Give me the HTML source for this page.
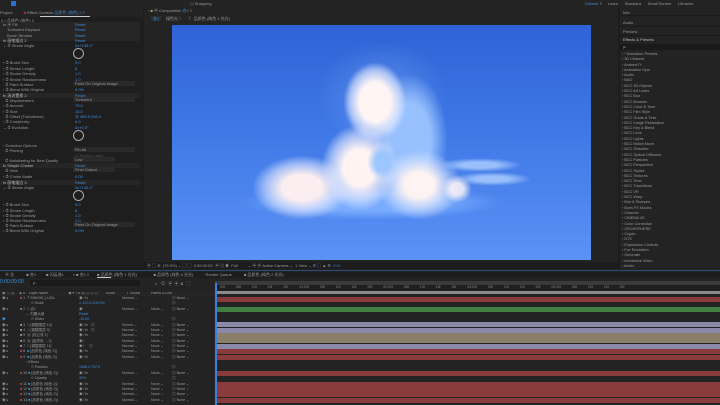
<!DOCTYPE html>
<html><head><meta charset="utf-8"><style>
*{margin:0;padding:0;box-sizing:border-box}
body{width:720px;height:405px;overflow:hidden;background:#1d1d1d;position:relative;font-family:"Liberation Sans","Noto Sans CJK SC",sans-serif;font-size:4px;color:#9a9a9a}
.a{position:absolute;white-space:nowrap;line-height:5px}
.b{color:#3d8fe0}
.bar{position:absolute;left:215px;right:0;height:5px}
.col{position:absolute;top:296px;line-height:5.35px;font-size:3.6px;white-space:nowrap;overflow:hidden}
.c{position:absolute;border-radius:45%}
</style></head><body>
<div class="a" style="left:0;top:0;width:720px;height:8px;background:#232323"></div>
<div class="a" style="left:11px;top:1px;width:5px;height:5px;background:#2d6fd0"></div>
<div class="a" style="left:190px;top:1px;color:#999">☐ Snapping</div>
<div class="a" style="left:585px;top:1px" ><span class="b">Default</span> &nbsp;≡ &nbsp;&nbsp;&nbsp; Learn &nbsp;&nbsp;&nbsp;&nbsp; Standard &nbsp;&nbsp;&nbsp;&nbsp; Small Screen &nbsp;&nbsp;&nbsp;&nbsp; Libraries</div>

<div class="a" style="left:0;top:8px;width:143px;height:255px;background:#1e1e1e;overflow:hidden">
<div class="a" style="left:0;top:0;width:143px;height:9px;background:#232323"></div>
<div class="a" style="left:0;top:2px">Project &nbsp;&nbsp;&nbsp;&nbsp;&nbsp;&nbsp;&nbsp;&nbsp; <span style="color:#c33">■</span> Effect Controls <span class="b">品质色 (纯色) 2</span> ≡</div>
</div>
<div class="a" style="left:40px;top:16px;width:50px;height:1px;background:#ccc"></div>
<div class="a" style="left:1px;top:18px">2 • 品质色 (纯色) 2</div>
<div class="a" style="left:0;top:22px;width:140px;height:19px;background:#262626"></div>
<div class="a" style="left:3px;top:22px">fx ▣ Fill</div><div class="a b" style="left:75px;top:22px">Reset</div>
<div class="a" style="left:7px;top:27px">Turbulent Displace</div><div class="a b" style="left:75px;top:27px">Reset</div>
<div class="a" style="left:7px;top:33px">Brush Strokes</div><div class="a b" style="left:75px;top:33px">Reset</div>
<div class="a" style="left:3px;top:38px;color:#bbb">fx 画笔描边 2</div><div class="a b" style="left:75px;top:38px">Reset</div>
<div class="a" style="left:3px;top:43px">⌄ ⏱ Stroke Angle</div><div class="a b" style="left:75px;top:43px">0x+135.0°</div>
<div class="a" style="left:73px;top:48px;width:11px;height:11px;border:1px solid #aaa;border-radius:50%"></div>
<div class="a" style="left:3px;top:60px">› ⏱ Brush Size</div><div class="a b" style="left:75px;top:60px">5.0</div>
<div class="a" style="left:3px;top:66px">› ⏱ Stroke Length</div><div class="a b" style="left:75px;top:66px">8</div>
<div class="a" style="left:3px;top:71px">› ⏱ Stroke Density</div><div class="a b" style="left:75px;top:71px">1.0</div>
<div class="a" style="left:3px;top:77px">› ⏱ Stroke Randomness</div><div class="a b" style="left:75px;top:77px">1.0</div>
<div class="a" style="left:3px;top:82px">&nbsp; ⏱ Paint Surface</div><div class="a" style="left:73px;top:81px;width:62px;height:5px;background:#2a2a2a;padding-left:2px">Paint On Original Image</div>
<div class="a" style="left:3px;top:87px">› ⏱ Blend With Original</div><div class="a b" style="left:75px;top:87px">0.0%</div>
<div class="a" style="left:0;top:93px;width:140px;height:5px;background:#262626"></div>
<div class="a" style="left:3px;top:93px;color:#bbb">fx 湍流置换 2</div><div class="a b" style="left:75px;top:93px">Reset</div>
<div class="a" style="left:3px;top:98px">&nbsp; ⏱ Displacement</div><div class="a" style="left:73px;top:97px;width:62px;height:5px;background:#2a2a2a;padding-left:2px">Turbulent</div>
<div class="a" style="left:3px;top:103px">› ⏱ Amount</div><div class="a b" style="left:75px;top:103px">75.0</div>
<div class="a" style="left:3px;top:109px">› ⏱ Size</div><div class="a b" style="left:75px;top:109px">15.0</div>
<div class="a" style="left:3px;top:114px">&nbsp; ⏱ Offset (Turbulence)</div><div class="a b" style="left:75px;top:114px">⊕ 960.0,540.0</div>
<div class="a" style="left:3px;top:119px">› ⏱ Complexity</div><div class="a b" style="left:75px;top:119px">6.0</div>
<div class="a" style="left:3px;top:125px">⌄ ⏱ Evolution</div><div class="a b" style="left:75px;top:125px">0x+0.0°</div>
<div class="a" style="left:73px;top:130px;width:11px;height:11px;border:1px solid #aaa;border-radius:50%"></div>
<div class="a" style="left:3px;top:143px">› Evolution Options</div>
<div class="a" style="left:3px;top:148px">&nbsp; ⏱ Pinning</div><div class="a" style="left:73px;top:147px;width:62px;height:5px;background:#2a2a2a;padding-left:2px">Pin All</div>
<div class="a" style="left:75px;top:153px;color:#555">☐ Resize Layer</div>
<div class="a" style="left:3px;top:158px">&nbsp; ⏱ Antialiasing for Best Quality</div><div class="a" style="left:73px;top:157px;width:42px;height:5px;background:#2a2a2a;padding-left:2px">Low</div>
<div class="a" style="left:0;top:163px;width:140px;height:5px;background:#262626"></div>
<div class="a" style="left:3px;top:163px;color:#bbb">fx Simple Choker</div><div class="a b" style="left:75px;top:163px">Reset</div>
<div class="a" style="left:3px;top:168px">&nbsp; ⏱ View</div><div class="a" style="left:73px;top:167px;width:42px;height:5px;background:#2a2a2a;padding-left:2px">Final Output</div>
<div class="a" style="left:3px;top:174px">› ⏱ Choke Matte</div><div class="a b" style="left:75px;top:174px">0.00</div>
<div class="a" style="left:0;top:180px;width:140px;height:5px;background:#262626"></div>
<div class="a" style="left:3px;top:180px;color:#bbb">fx 画笔描边 3</div><div class="a b" style="left:75px;top:180px">Reset</div>
<div class="a" style="left:3px;top:185px">⌄ ⏱ Stroke Angle</div><div class="a b" style="left:75px;top:185px">0x+135.0°</div>
<div class="a" style="left:73px;top:190px;width:11px;height:11px;border:1px solid #aaa;border-radius:50%"></div>
<div class="a" style="left:3px;top:202px">› ⏱ Brush Size</div><div class="a b" style="left:75px;top:202px">5.0</div>
<div class="a" style="left:3px;top:208px">› ⏱ Stroke Length</div><div class="a b" style="left:75px;top:208px">8</div>
<div class="a" style="left:3px;top:213px">› ⏱ Stroke Density</div><div class="a b" style="left:75px;top:213px">1.0</div>
<div class="a" style="left:3px;top:218px">› ⏱ Stroke Randomness</div><div class="a b" style="left:75px;top:218px">1.0</div>
<div class="a" style="left:3px;top:223px">&nbsp; ⏱ Paint Surface</div><div class="a" style="left:73px;top:222px;width:62px;height:5px;background:#2a2a2a;padding-left:2px">Paint On Original Image</div>
<div class="a" style="left:3px;top:228px">› ⏱ Blend With Original</div><div class="a b" style="left:75px;top:228px">0.0%</div>

<!-- composition panel -->
<div class="a" style="left:144px;top:8px;width:474px;height:262px;background:#232323"></div>
<div class="a" style="left:148px;top:8px">› <span style="color:#c8a060">■</span> ▣ Composition <span class="b">合1</span> ≡</div>
<div class="a" style="left:151px;top:16px;width:10px;height:5px;background:#2d2d2d"></div>
<div class="a" style="left:153px;top:16px"><span class="b">合1</span> &nbsp;&nbsp;&nbsp;&nbsp; 绿色光 〉 &nbsp; 〈 &nbsp; 品质色 (纯色 1 光光)</div>
<div class="a" style="left:172px;top:25px;width:419px;height:235px;background:linear-gradient(180deg,#2f62d6 0%,#3f78e6 45%,#5b92f6 100%);overflow:hidden">
 <div class="c" style="left:140px;top:10px;width:140px;height:120px;background:radial-gradient(ellipse,rgba(150,195,255,.35),rgba(140,190,255,0) 65%)"></div>
 <div class="c" style="left:70px;top:160px;width:260px;height:35px;border-radius:50%;background:radial-gradient(ellipse,rgba(125,175,255,.9) 35%,rgba(120,170,255,0) 70%)"></div>
 <div class="c" style="left:200px;top:50px;width:75px;height:130px;background:radial-gradient(ellipse,rgba(160,200,255,.9) 40%,rgba(150,190,255,0) 72%)"></div>
 <div class="c" style="left:172px;top:38px;width:62px;height:78px;background:radial-gradient(ellipse,#fff6f4 35%,rgba(230,235,255,.6) 58%,rgba(200,220,255,0) 72%)"></div>
 <div class="c" style="left:150px;top:100px;width:75px;height:85px;background:radial-gradient(ellipse,#fff4f2 30%,rgba(235,238,255,.55) 55%,rgba(200,220,255,0) 72%)"></div>
 <div class="c" style="left:80px;top:130px;width:100px;height:65px;background:radial-gradient(ellipse,#fbeef0 28%,rgba(230,235,255,.55) 52%,rgba(200,220,255,0) 70%)"></div>
 <div class="c" style="left:205px;top:125px;width:85px;height:70px;background:radial-gradient(ellipse,#fdf3f2 25%,rgba(220,230,255,.55) 50%,rgba(180,210,255,0) 70%)"></div>
 <div class="c" style="left:195px;top:120px;width:30px;height:35px;background:radial-gradient(ellipse,rgba(150,195,255,.9) 35%,rgba(150,190,255,0) 70%)"></div>
 <div class="c" style="left:270px;top:150px;width:30px;height:28px;background:radial-gradient(ellipse,rgba(255,245,245,.85) 30%,rgba(200,220,255,0) 70%)"></div>
 <div class="c" style="left:265px;top:133px;width:85px;height:14px;border-radius:50%;background:radial-gradient(ellipse,rgba(175,208,255,.8) 30%,rgba(170,205,255,0) 70%)"></div>
 <div class="c" style="left:280px;top:147px;width:80px;height:14px;border-radius:50%;background:radial-gradient(ellipse,rgba(175,208,255,.8) 30%,rgba(170,205,255,0) 70%)"></div>
</div>
<div class="a" style="left:144px;top:262px;width:474px;height:7px;background:#1c1c1c"></div>
<div class="a" style="left:147px;top:263px">▣ ▢ ⊚ &nbsp;(75.0%) ⌄ ▢ ▢ &nbsp;0:00:00:00 &nbsp;▣ ◎ ◉ &nbsp;Full &nbsp;&nbsp;&nbsp;&nbsp;&nbsp;&nbsp;&nbsp; ⌄ ▣ ▣ Active Camera ⌄ &nbsp;1 View ⌄ <span class="b">⊞</span> ▢ ▲ ⚙ <span class="b">+0.0</span></div>

<!-- right panel -->
<div class="a" style="left:620px;top:8px;width:100px;height:262px;background:#232323;overflow:hidden">
<div class="a" style="left:3px;top:2px">Info</div>
<div class="a" style="left:0;top:7px;width:100px;height:1px;background:#1a1a1a"></div>
<div class="a" style="left:3px;top:12px">Audio</div>
<div class="a" style="left:0;top:18px;width:100px;height:1px;background:#1a1a1a"></div>
<div class="a" style="left:3px;top:21px">Preview</div>
<div class="a" style="left:0;top:27px;width:100px;height:1px;background:#1a1a1a"></div>
<div class="a" style="left:3px;top:29px;color:#bbb">Effects &amp; Presets</div>
<div class="a" style="left:0;top:36px;width:100px;height:6px;background:#1a1a1a;padding-left:3px">ρ-</div>
<div class="a" style="left:2px;top:44px;line-height:5.3px;font-size:3.8px">› * Animation Presets<br>› 3D Channel<br>› AndrewYY<br>› Animation Gym<br>› Audio<br>› BAO<br>› BCC 3D Objects<br>› BCC Art Looks<br>› BCC Blur<br>› BCC Browser<br>› BCC Color &amp; Tone<br>› BCC Film Style<br>› BCC Grads &amp; Tints<br>› BCC Image Restoration<br>› BCC Key &amp; Blend<br>› BCC Lens<br>› BCC Lights<br>› BCC Match Move<br>› BCC Obsolete<br>› BCC Optical Diffusion<br>› BCC Particles<br>› BCC Perspective<br>› BCC Stylize<br>› BCC Textures<br>› BCC Time<br>› BCC Transitions<br>› BCC VR<br>› BCC Warp<br>› Blur &amp; Sharpen<br>› Boris FX Mocha<br>› Channel<br>› CINEMA 4D<br>› Color Correction<br>› CROSSPHERE<br>› Crypto<br>› DTS<br>› Expression Controls<br>› Fce Emulation<br>› Generate<br>› Immersive Video<br>› lensfx</div>
</div>

<!-- timeline -->
<div class="a" style="left:0;top:270px;width:720px;height:135px;background:#232323"></div>
<div class="a" style="left:0;top:270px;width:720px;height:1px;background:#2a4a7a"></div>
<div class="a" style="left:0;top:272px;width:720px;height:6px;background:#1d1d1d;overflow:hidden">
<div class="a" style="left:5px;top:0">▣ 总 &nbsp;&nbsp;&nbsp;&nbsp;&nbsp;&nbsp;&nbsp;&nbsp;&nbsp; ■ 合1 &nbsp;&nbsp;&nbsp;&nbsp;&nbsp;&nbsp;&nbsp; ■ 闪云流1 &nbsp;&nbsp;&nbsp;&nbsp;&nbsp;&nbsp; × ■ 合1 ≡ &nbsp;&nbsp;&nbsp;&nbsp;&nbsp; ■ 品质色 (纯色 1 光光) &nbsp;&nbsp;&nbsp;&nbsp;&nbsp;&nbsp;&nbsp;&nbsp;&nbsp;&nbsp;&nbsp;&nbsp;&nbsp; ■ 品质色 (纯色 4 光光) &nbsp;&nbsp;&nbsp;&nbsp;&nbsp;&nbsp;&nbsp;&nbsp;&nbsp; Render Queue &nbsp;&nbsp;&nbsp;&nbsp;&nbsp;&nbsp;&nbsp;&nbsp;&nbsp; ■ 品质色 (纯色 2 光光)</div></div>
<div class="a" style="left:97px;top:277px;width:14px;height:1px;background:#ccc"></div>
<div class="a b" style="left:0;top:280px;font-size:5px">0:00:00:00</div>
<div class="a" style="left:30px;top:280px;width:110px;height:6px;background:#1a1a1a;padding-left:3px">ρ-</div>
<div class="a" style="left:155px;top:281px">⤶ &nbsp; ⟲ &nbsp; ▣ &nbsp;▣ &nbsp;⊚ &nbsp;&nbsp;▢</div>
<div class="a" style="left:215px;top:281px;width:505px;height:4px;background:#3a3a3a"></div>
<div class="a" style="left:215px;top:285px;width:505px;height:6px;background:#1f1f1f;overflow:hidden">
<div class="a" style="left:5px;top:0;font-size:3.5px;word-spacing:10px;color:#888">00f 05f 10f 15f 20f 01:00f 05f 10f 15f 20f 02:00f 05f 10f 15f 20f 03:00f 05f 10f 15f 20f 04:00f 05f 10f 15f 20f</div></div>
<div class="a" style="left:215px;top:291px;width:505px;height:3px;background:#8a8a8a"></div>
<div class="a" style="left:0;top:292px;width:215px;height:4px;background:#262626;overflow:hidden">
<div class="a" style="left:2px;top:-1px;font-size:3.5px">◉ ◁ ▣ &nbsp;&nbsp;&nbsp; ◈ # &nbsp;&nbsp; Layer Name &nbsp;&nbsp;&nbsp;&nbsp;&nbsp;&nbsp;&nbsp;&nbsp;&nbsp;&nbsp;&nbsp;&nbsp;&nbsp;&nbsp;&nbsp;&nbsp;&nbsp;&nbsp;&nbsp; ◉✦ \ fx ▣ ◎ ◎ ◎ &nbsp;&nbsp;&nbsp;&nbsp;&nbsp;&nbsp; Mode &nbsp;&nbsp;&nbsp;&nbsp;&nbsp;&nbsp;&nbsp;&nbsp;&nbsp;&nbsp; T TrkMat &nbsp;&nbsp;&nbsp;&nbsp;&nbsp;&nbsp;&nbsp;&nbsp;&nbsp; Parent &amp; Link</div></div>

<div class="bar" style="top:297px;background:#8a3c3c"></div>
<div class="bar" style="top:307px;background:#3f7f3f"></div>
<div class="bar" style="top:322px;background:#8a8aa8"></div>
<div class="bar" style="top:328px;background:#8a8aa8"></div>
<div class="bar" style="top:333px;background:#8a7f68"></div>
<div class="bar" style="top:338px;background:#8a7f68"></div>
<div class="bar" style="top:344px;background:#8a8aa8"></div>
<div class="bar" style="top:349px;background:#8a3c3c"></div>
<div class="bar" style="top:355px;background:#8a3c3c"></div>
<div class="bar" style="top:371px;background:#8a3c3c"></div>
<div class="bar" style="top:382px;background:#8a3c3c"></div>
<div class="bar" style="top:387px;background:#8a3c3c"></div>
<div class="bar" style="top:392px;background:#8a3c3c"></div>
<div class="bar" style="top:398px;background:#8a3c3c"></div>
<div class="a" style="left:215px;top:283px;width:1.5px;height:122px;background:#3d7fe0"></div>

<div class="col" style="left:20px;width:58px">
<span style="color:#c44">■</span> 1 &nbsp;T SWIOW_LUSA<br>
&nbsp;&nbsp;&nbsp;&nbsp;&nbsp;&nbsp;&nbsp;&nbsp;&nbsp;&nbsp; ⏱ Scale<br>
<span style="color:#5a5">■</span> 2 &nbsp;□ 合1<br>
&nbsp;&nbsp;&nbsp;&nbsp;&nbsp; ⌄ 内置大纲<br>
&nbsp;&nbsp;&nbsp;&nbsp;&nbsp;&nbsp;&nbsp;&nbsp;&nbsp;&nbsp; ⏱ Slider<br>
<span style="color:#aab">■</span> 3 &nbsp;□ [调整图层 10]<br>
<span style="color:#aab">■</span> 4 &nbsp;□ [调整图层 9]<br>
<span style="color:#b9a07a">■</span> 5 &nbsp;▣ [闪云流 1]<br>
<span style="color:#b9a07a">■</span> 6 &nbsp;▣ [品质色 ... 1]<br>
<span style="color:#aab">■</span> 7 &nbsp;□ [调整图层 11]<br>
<span style="color:#c44">■</span> 8 &nbsp;<span class="b">■</span> [品质色 (纯色 2)]<br>
<span style="color:#c44">■</span> 9 &nbsp;<span class="b">■</span> [品质色 (纯色 2)]<br>
&nbsp;&nbsp;&nbsp;&nbsp;&nbsp; › Effects<br>
&nbsp;&nbsp;&nbsp;&nbsp;&nbsp;&nbsp;&nbsp;&nbsp;&nbsp;&nbsp; ⏱ Position<br>
<span style="color:#c44">■</span> 10 <span class="b">■</span> [品质色 (纯色 2)]<br>
&nbsp;&nbsp;&nbsp;&nbsp;&nbsp;&nbsp;&nbsp;&nbsp;&nbsp;&nbsp; ⏱ Opacity<br>
<span style="color:#c44">■</span> 11 <span class="b">■</span> [品质色 (纯色 2)]<br>
<span style="color:#c44">■</span> 12 <span class="b">■</span> [品质色 (纯色 2)]<br>
<span style="color:#c44">■</span> 13 <span class="b">■</span> [品质色 (纯色 2)]<br>
<span style="color:#c44">■</span> 14 <span class="b">■</span> [品质色 (纯色 2)]</div>
<div class="col" style="left:2px;width:16px">◉ ▸<br><br>◉ ▸<br><br><span class="b">◆</span><br>◉ ▸<br>◉ ▸<br>◉ ▸<br>◉ ▸<br>◉ ▸<br>◉ ▸<br>◉ ▸<br><br><br>◉ ▸<br><br>◉ ▸<br>◉ ▸<br>◉ ▸<br>◉ ▸</div>
<div class="col" style="left:79px;width:42px">◉ ⁄ fx<br><span class="b">∞ 100.0,100.0%</span><br>◉<br><span class="b">Reset</span><br><span class="b">-10.00</span><br>◉ ⁄ fx &nbsp; ◎<br>◉ ⁄ fx &nbsp; ◎<br>◉ ⁄ fx<br>◉ ⁄<br>◉ ⁄ &nbsp;&nbsp;&nbsp; ◎<br>◉ ⁄ fx<br>◉ ⁄ fx<br><br><span class="b">1458.2,797.5</span><br>◉ ⁄ fx<br><span class="b">30%</span><br>◉ ⁄ fx<br>◉ ⁄ fx<br>◉ ⁄ fx<br>◉ ⁄ fx</div>
<div class="col" style="left:122px;width:28px">Normal ⌄<br><br>Normal ⌄<br><br><br>Screen ⌄<br>Normal ⌄<br>Normal ⌄<br>Normal ⌄<br>Normal ⌄<br>Normal ⌄<br>Normal ⌄<br><br><br>Normal ⌄<br><br>Normal ⌄<br>Normal ⌄<br>Normal ⌄<br>Normal ⌄</div>
<div class="col" style="left:151px;width:20px"><br><br>None ⌄<br><br><br>None ⌄<br>None ⌄<br>None ⌄<br>None ⌄<br>None ⌄<br>None ⌄<br>None ⌄<br><br><br>None ⌄<br><br>None ⌄<br>None ⌄<br>None ⌄<br>None ⌄</div>
<div class="col" style="left:172px;width:40px">◎ None ⌄<br>◎<br>◎ None ⌄<br><br>◎<br>◎ None ⌄<br>◎ None ⌄<br>◎ None ⌄<br>◎ None ⌄<br>◎ None ⌄<br>◎ None ⌄<br>◎ None ⌄<br><br>◎<br>◎ None ⌄<br>◎<br>◎ None ⌄<br>◎ None ⌄<br>◎ None ⌄<br>◎ None ⌄</div>
</body></html>
